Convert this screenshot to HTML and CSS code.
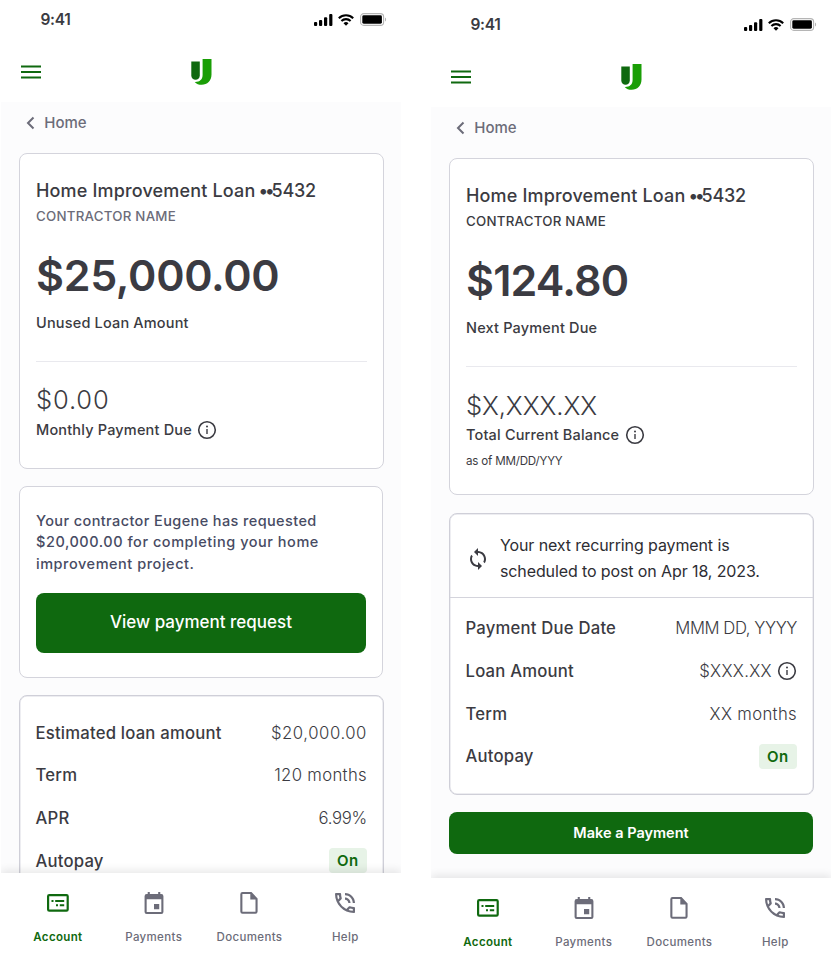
FILE: index.html
```html
<!DOCTYPE html>
<html lang="en">
<head>
<meta charset="utf-8">
<title>Home Improvement Loan</title>
<link rel="stylesheet" href="styles.css">
</head>
<body>
<svg class="sprite" aria-hidden="true">
  <symbol id="signal" viewBox="0 0 19 12"><rect x="0" y="8" width="3.2" height="4" rx="1"/><rect x="5" y="6" width="3.2" height="6" rx="1"/><rect x="10" y="3.2" width="3.2" height="8.8" rx="1"/><rect x="15.2" y="0" width="3.2" height="12" rx="1"/></symbol>
  <symbol id="wifi" viewBox="0 0 16 12"><g fill="none" stroke="currentColor" stroke-width="2.1"><path d="M.8 4.2a10.3 10.3 0 0 1 14.4 0"/><path d="M3.4 7a6.6 6.6 0 0 1 9.2 0"/></g><path d="M5.5 9.2a3.8 3.8 0 0 1 5 0L8 11.8z"/></symbol>
  <symbol id="battery" viewBox="0 0 27 13"><rect x=".6" y=".6" width="23" height="11.8" rx="3.2" fill="#fff" stroke="#b5b5b5" stroke-width="1.1"/><rect x="2.3" y="2.3" width="19.6" height="8.4" rx="1.4"/><path d="M25 4.5v4c1.5-.6 1.5-3.4 0-4z" fill="#b5b5b5"/></symbol>
  <symbol id="menu" viewBox="0 0 20 14"><path d="M0 1.6h20M0 7h20M0 12.4h20" stroke="currentColor" stroke-width="2"/></symbol>
  <symbol id="brand" viewBox="0 0 21 26"><path d="M.3 2.6h8.5v14a4.25 4.25 0 0 1-8.5 0z" fill="#0f690f"/><path d="M11.6 0h8.9v15.5c0 6.2-4.3 10.3-9.8 10.3-2.8 0-5.3-1-7-2.9 4.8.2 7.9-2.3 7.9-6.9z" fill="#1a9e06"/></symbol>
  <symbol id="back" viewBox="0 0 9 14"><path d="M7.5 1.5 2 7l5.5 5.5" fill="none" stroke="currentColor" stroke-width="2"/></symbol>
  <symbol id="info" viewBox="0 0 20 20"><circle cx="10" cy="10" r="8.3" fill="none" stroke="currentColor" stroke-width="1.6"/><circle cx="10" cy="6.5" r="1"/><path d="M9.3 9h1.4v5H9.3z"/></symbol>
  <symbol id="sync" viewBox="1 0 22 24"><path d="M12 4V1L8 5l4 4V6c3.31 0 6 2.69 6 6 0 1.01-.25 1.97-.7 2.8l1.46 1.46C19.54 15.03 20 13.57 20 12c0-4.42-3.58-8-8-8zm0 14c-3.31 0-6-2.69-6-6 0-1.01.25-1.97.7-2.8L5.24 7.74C4.46 8.97 4 10.43 4 12c0 4.42 3.58 8 8 8v3l4-4-4-4v3z"/></symbol>
  <symbol id="account" viewBox="0 0 22 18"><rect x="1.1" y="1.1" width="19.6" height="15.5" rx="1.2" fill="none" stroke="currentColor" stroke-width="2.2"/><path d="M4.5 6h2v2h-2zM8.2 6h9v2h-9zM9 10.2h2v2H9zM12.8 10.2h4.4v2h-4.4z"/></symbol>
  <symbol id="calendar" viewBox="3 1 18 21"><path d="M19 3h-1V1h-2v2H8V1H6v2H5a2 2 0 0 0-2 2v15a2 2 0 0 0 2 2h14a2 2 0 0 0 2-2V5a2 2 0 0 0-2-2zm0 17H5V8h14zm-2-7.5h-5v5h5z"/></symbol>
  <symbol id="document" viewBox="0 0 18 22"><path d="M2.5.1h9L17.6 6.4v13.1a2.2 2.2 0 0 1-2.2 2.2H2.5A2.2 2.2 0 0 1 .3 19.5V2.3A2.2 2.2 0 0 1 2.5.1zm-.1 2v17.6h13.1V7.4h-5.2V2.1z"/></symbol>
  <symbol id="call" viewBox="3 3 18 18"><path d="M19 12h2c0-4.97-4.03-9-9-9v2c3.87 0 7 3.13 7 7zm-4 0h2c0-2.76-2.24-5-5-5v2c1.66 0 3 1.34 3 3zm5 3.5c-1.25 0-2.45-.2-3.57-.57a1 1 0 0 0-1.02.24l-2.2 2.2a15.05 15.05 0 0 1-6.59-6.59l2.2-2.21a1 1 0 0 0 .25-1.01A11.36 11.36 0 0 1 8.5 4c0-.55-.45-1-1-1H4c-.55 0-1 .45-1 1 0 9.39 7.61 17 17 17 .55 0 1-.45 1-1v-3.5c0-.55-.45-1-1-1zM5.03 5h1.5c.07.88.22 1.75.45 2.58l-1.2 1.21c-.4-1.21-.66-2.47-.75-3.79zM19 18.97c-1.32-.09-2.6-.35-3.8-.75l1.2-1.2c.85.24 1.72.39 2.6.45z"/></symbol>
</svg>

<main class="stage">
  <section class="screen">
    <div class="status"><span class="time">9:41</span><div class="indicators"><svg class="i-signal"><use href="#signal"/></svg><svg class="i-wifi"><use href="#wifi"/></svg><svg class="i-battery"><use href="#battery"/></svg></div></div>
    <header class="topbar"><svg class="i-menu"><use href="#menu"/></svg><svg class="i-brand"><use href="#brand"/></svg></header>
    <div class="content">
      <a class="back"><svg class="i-back"><use href="#back"/></svg>Home</a>
      <article class="card summary">
        <h1>Home Improvement Loan <span class="dots">••</span><span class="last4">5432</span></h1>
        <p class="contractor muted">CONTRACTOR NAME</p>
        <p class="amount">$25,000.00</p>
        <p class="label">Unused Loan Amount</p>
        <hr>
        <p class="subamount">$0.00</p>
        <p class="label with-icon"><span>Monthly Payment Due</span><svg class="i-info"><use href="#info"/></svg></p>
      </article>
      <article class="card request">
        <p class="message"><span>Your contractor Eugene has requested</span><br><span class="wider">$20,000.00 for completing your home</span><br><span class="wider">improvement project.</span></p>
        <button class="button large">View payment request</button>
      </article>
      <article class="card details">
        <dl class="rows">
          <div class="row"><dt>Estimated loan amount</dt><dd class="digits">$20,000.00</dd></div>
          <div class="row"><dt>Term</dt><dd>120 months</dd></div>
          <div class="row"><dt>APR</dt><dd class="percent">6.99%</dd></div>
          <div class="row"><dt>Autopay</dt><dd class="tag">On</dd></div>
        </dl>
      </article>
    </div>
    <nav class="tabs">
      <a class="tab active"><svg class="i-account"><use href="#account"/></svg><span>Account</span></a>
      <a class="tab"><svg class="i-calendar"><use href="#calendar"/></svg><span>Payments</span></a>
      <a class="tab"><svg class="i-document"><use href="#document"/></svg><span>Documents</span></a>
      <a class="tab"><svg class="i-call"><use href="#call"/></svg><span>Help</span></a>
    </nav>
  </section>

  <section class="screen lowered">
    <div class="status"><span class="time">9:41</span><div class="indicators"><svg class="i-signal"><use href="#signal"/></svg><svg class="i-wifi"><use href="#wifi"/></svg><svg class="i-battery"><use href="#battery"/></svg></div></div>
    <header class="topbar"><svg class="i-menu"><use href="#menu"/></svg><svg class="i-brand"><use href="#brand"/></svg></header>
    <div class="content">
      <a class="back"><svg class="i-back"><use href="#back"/></svg>Home</a>
      <article class="card summary tall">
        <h1>Home Improvement Loan <span class="dots">••</span><span class="last4">5432</span></h1>
        <p class="contractor">CONTRACTOR NAME</p>
        <p class="amount tight">$124.80</p>
        <p class="label">Next Payment Due</p>
        <hr>
        <p class="subamount letters">$X,XXX.XX</p>
        <p class="label with-icon"><span>Total Current Balance</span><svg class="i-info"><use href="#info"/></svg></p>
        <p class="asof">as of MM/DD/YYY</p>
      </article>
      <article class="card details schedule">
        <div class="notice"><svg class="i-sync"><use href="#sync"/></svg><p>Your next recurring payment is<br>scheduled to post on Apr 18, 2023.</p></div>
        <dl class="rows">
          <div class="row"><dt>Payment Due Date</dt><dd class="date">MMM DD, YYYY</dd></div>
          <div class="row"><dt>Loan Amount</dt><dd class="with-icon letters">$XXX.XX<svg class="i-info"><use href="#info"/></svg></dd></div>
          <div class="row"><dt>Term</dt><dd>XX months</dd></div>
          <div class="row"><dt>Autopay</dt><dd class="tag">On</dd></div>
        </dl>
      </article>
      <button class="button">Make a Payment</button>
    </div>
    <nav class="tabs">
      <a class="tab active"><svg class="i-account"><use href="#account"/></svg><span>Account</span></a>
      <a class="tab"><svg class="i-calendar"><use href="#calendar"/></svg><span>Payments</span></a>
      <a class="tab"><svg class="i-document"><use href="#document"/></svg><span>Documents</span></a>
      <a class="tab"><svg class="i-call"><use href="#call"/></svg><span>Help</span></a>
    </nav>
  </section>
</main>
</body>
</html>
```
FILE: styles.css
```css
* { box-sizing: border-box; margin: 0; padding: 0; }

body {
  background: #fff;
  color: #3b3b42;
  font-family: Inter, "Liberation Sans", sans-serif;
  overflow: hidden;
}

svg { display: block; flex: none; fill: currentColor; }
.sprite { width: 0; height: 0; position: absolute; }

.stage {
  display: grid;
  grid-template-columns: 400px 400px;
  column-gap: 30px;
  padding-left: 1px;
  height: 961px;
  overflow: hidden;
}

.screen { display: flex; flex-direction: column; height: 961px; }
.lowered { padding-top: 5.4px; height: 966.4px; }

/* Status bar and header */
.status {
  flex: none;
  display: flex;
  justify-content: space-between;
  align-items: center;
  height: 39px;
  padding: 0 14.5px 0 39.5px;
}
.time { font-size: 15.5px; font-weight: 600; letter-spacing: -0.02em; }
.indicators { display: flex; align-items: center; color: #000; }
.i-signal { width: 19px; height: 12px; margin-right: 5px; }
.i-wifi { width: 16px; height: 12px; margin-right: 5.5px; }
.i-battery { width: 27px; height: 13px; }

.topbar {
  flex: none;
  display: flex;
  align-items: center;
  height: 63px;
  padding: 2px 0 0 20px;
}
.i-menu { width: 20px; height: 14px; color: #0f690f; }
.i-brand { width: 21px; height: 26px; margin-left: 150px; }

/* Page content */
.content {
  flex: 1;
  min-height: 0;
  overflow: hidden;
  background: #fcfcfd;
  padding-left: 18px;
}
.back {
  display: flex;
  align-items: center;
  gap: 9px;
  height: 20px;
  margin: 10.5px 0 20.5px 7.3px;
  color: #6c6c79;
  font-size: 15px;
  font-weight: 500;
}
.i-back { width: 9px; height: 14px; }

.card {
  width: 365px;
  border: 1px solid #d4d4dc;
  border-radius: 8px;
  background: #fff;
}
.summary { height: 315.5px; padding: 25px 16px 0; }
.summary.tall { height: 336.5px; }
h1 { font-size: 18px; font-weight: 500; line-height: 24px; letter-spacing: 0.009em; white-space: nowrap; }
.dots { margin-left: -1.8px; letter-spacing: -0.17em; }
.last4 { letter-spacing: -0.015em; }
.contractor { margin-top: 3px; font-size: 13.3px; font-weight: 500; line-height: 20px; letter-spacing: 0.0187em; }
.muted { color: #6c6c79; }
.amount { margin-top: 23.5px; font-size: 43px; font-weight: 600; line-height: 50px; letter-spacing: -0.007em; }
.amount.tight { letter-spacing: -0.019em; }
.label { margin-top: 13.5px; font-size: 14.5px; font-weight: 500; line-height: 20px; letter-spacing: 0.012em; }
hr { height: 1px; margin-top: 28px; border: 0; background: #e9e9ee; }
.subamount { margin-top: 23.3px; font-size: 25.5px; font-weight: 300; line-height: 30px; letter-spacing: 0.034em; }
.subamount.letters { letter-spacing: -0.002em; }
.with-icon { display: flex; align-items: center; gap: 5.5px; }
.subamount + .label { margin-top: 4.7px; }
.i-info { width: 20px; height: 20px; }
.asof { margin-top: 6.2px; font-size: 11.6px; line-height: 18px; letter-spacing: -0.018em; }

.request { width: 364px; height: 192px; margin-top: 17.5px; padding: 23px 16px 0; }
.message { color: #474b63; font-size: 14.5px; font-weight: 500; line-height: 21.3px; letter-spacing: 0.027em; white-space: nowrap; }
.wider { letter-spacing: 0.037em; }

.button {
  display: block;
  width: 364px;
  height: 42.5px;
  margin-top: 17px;
  padding-bottom: 2px;
  border: 0;
  border-radius: 8px;
  background: #0f690f;
  color: #fff;
  font: 600 14.5px Inter, "Liberation Sans", sans-serif;
}
.button.large { width: 330px; height: 60px; margin-top: 18.7px; padding-bottom: 1px; font-size: 17px; font-weight: 500; }

/* Loan details */
.details { margin-top: 16.8px; border-color: #cfcfd8; box-shadow: inset 0 0 0 0.5px #dcdce4; }
.rows { padding: 15.5px 16px 16px 15.5px; }
.row {
  display: flex;
  justify-content: space-between;
  align-items: center;
  height: 42.7px;
  font-size: 16.7px;
}
dt { font-weight: 500; letter-spacing: 0.012em; }
dd { font-weight: 300; letter-spacing: 0.02em; }
.digits { letter-spacing: 0.034em; }
.percent { letter-spacing: -0.015em; }
.date { letter-spacing: -0.026em; }
.row .with-icon { gap: 5px; }
.tag {
  padding: 0 8.6px;
  border-radius: 4px;
  background: #e7f3e7;
  color: #0f690f;
  font-size: 15px;
  font-weight: 600;
  line-height: 25px;
}
.schedule { height: 282px; margin-top: 18px; }
.notice {
  display: flex;
  align-items: center;
  height: 84.5px;
  padding: 6px 0 0 17px;
  border-bottom: 1px solid #d4d4dc;
}
.notice p { margin-left: 11px; font-size: 16px; line-height: 25.6px; letter-spacing: -0.007em; color: #2d2d33; }
.i-sync { width: 22px; height: 24px; }
.schedule .rows { padding-top: 8.7px; }

/* Bottom navigation */
.tabs {
  flex: none;
  display: flex;
  position: relative;
  height: 88px;
  padding-left: 9px;
  background: #fff;
  box-shadow: 0 -3px 8px rgba(0, 0, 0, 0.09);
  clip-path: inset(-12px 0 0 0);
}
.tab {
  display: grid;
  grid-template-rows: 24px 20px;
  row-gap: 12.5px;
  align-content: start;
  justify-items: center;
  align-items: center;
  width: 95.8px;
  padding-top: 17.5px;
  color: #6c6c79;
  font-size: 11.5px;
  font-weight: 500;
  letter-spacing: 0.03em;
}
.tab.active { color: #0f690f; font-weight: 600; }
.i-account { width: 22px; height: 18px; }
.i-calendar { width: 20px; height: 22px; }
.i-document { width: 18px; height: 22px; }
.i-call { width: 20px; height: 20px; }
```
